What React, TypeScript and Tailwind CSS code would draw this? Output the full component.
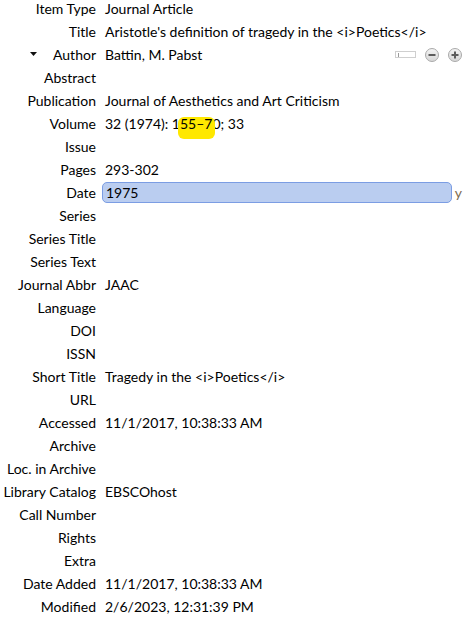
import React from 'react';

const rows: { label: string; value?: string }[] = [
  { label: 'Item Type', value: 'Journal Article' },
  { label: 'Title', value: "Aristotle's definition of tragedy in the <i>Poetics</i>" },
  { label: 'Author', value: 'Battin, M. Pabst' },
  { label: 'Abstract' },
  { label: 'Publication', value: 'Journal of Aesthetics and Art Criticism' },
  { label: 'Volume', value: '32 (1974): 155–70; 33' },
  { label: 'Issue' },
  { label: 'Pages', value: '293-302' },
  { label: 'Date', value: '1975' },
  { label: 'Series' },
  { label: 'Series Title' },
  { label: 'Series Text' },
  { label: 'Journal Abbr', value: 'JAAC' },
  { label: 'Language' },
  { label: 'DOI' },
  { label: 'ISSN' },
  { label: 'Short Title', value: 'Tragedy in the <i>Poetics</i>' },
  { label: 'URL' },
  { label: 'Accessed', value: '11/1/2017, 10:38:33 AM' },
  { label: 'Archive' },
  { label: 'Loc. in Archive' },
  { label: 'Library Catalog', value: 'EBSCOhost' },
  { label: 'Call Number' },
  { label: 'Rights' },
  { label: 'Extra' },
  { label: 'Date Added', value: '11/1/2017, 10:38:33 AM' },
  { label: 'Modified', value: '2/6/2023, 12:31:39 PM' },
];

function CircleButton({ plus }: { plus?: boolean }) {
  return (
    <svg width="14" height="14" viewBox="0 0 14 14" className="shrink-0">
      <defs>
        <linearGradient id={plus ? 'gp' : 'gm'} x1="0" y1="0" x2="0" y2="1">
          <stop offset="0" stopColor="#f4f4f4" />
          <stop offset="1" stopColor="#d6d6d6" />
        </linearGradient>
      </defs>
      <circle cx="7" cy="7" r="6.5" fill={`url(#${plus ? 'gp' : 'gm'})`} stroke="#a9a9a9" />
      <rect x="3.5" y="6" width="7" height="2" fill="#5c5c5c" />
      {plus && <rect x="6" y="3.5" width="2" height="7" fill="#5c5c5c" />}
    </svg>
  );
}

function Value({ label, value }: { label: string; value?: string }) {
  if (label === 'Volume') {
    return (
      <span>
        32 (1974): 1
        <span className="relative inline-block leading-[17px]">
          <span className="absolute left-[-2px] right-[-3px] top-[2px] h-[22px] rounded-[6px] bg-[#ffe800]" />
          <span className="relative">55–7</span>
        </span>
        0; 33
      </span>
    );
  }
  if (label === 'Date') {
    return (
      <div className="flex items-center w-full">
        <div className="h-[21px] flex-1 ml-[-3px] pl-[3px] rounded-[5px] border border-[#7b9de3] bg-[#bacdf0] leading-[19px]">
          {value}
        </div>
        <span className="ml-[3px] text-[#7d6b4f]">y</span>
      </div>
    );
  }
  return <span>{value}</span>;
}

export default function App() {
  return (
    <div
      className="w-[464px] h-[621px] overflow-hidden bg-white text-black text-[14px]"
      style={{ fontFamily: 'Lato, "Liberation Sans", sans-serif' }}
    >
      <div className="mt-[-3px] flex flex-col">
        {rows.map((r) => (
          <div key={r.label} className="flex items-center h-[23px] leading-[23px] whitespace-nowrap">
            <div className="w-[96px] shrink-0 flex items-center justify-end">
              {r.label === 'Author' && (
                <svg width="8" height="5" viewBox="0 0 8 5" className="mr-auto ml-[30px]">
                  <path d="M0 0h7L3.5 4z" fill="#111" />
                </svg>
              )}
              <span>{r.label}</span>
            </div>
            <div className="flex-1 flex items-center pl-[9px] pr-[2px]">
              <Value label={r.label} value={r.value} />
              {r.label === 'Author' && (
                <div className="ml-auto flex items-center">
                  <div className="w-[21px] h-[7px] border border-[#cfcfcf] bg-white flex items-center pl-[2px]">
                    <div className="w-px h-[4px] bg-[#9a9a9a]" />
                  </div>
                  <div className="ml-[9px]">
                    <CircleButton />
                  </div>
                  <div className="ml-[9px]">
                    <CircleButton plus />
                  </div>
                </div>
              )}
            </div>
          </div>
        ))}
      </div>
    </div>
  );
}
